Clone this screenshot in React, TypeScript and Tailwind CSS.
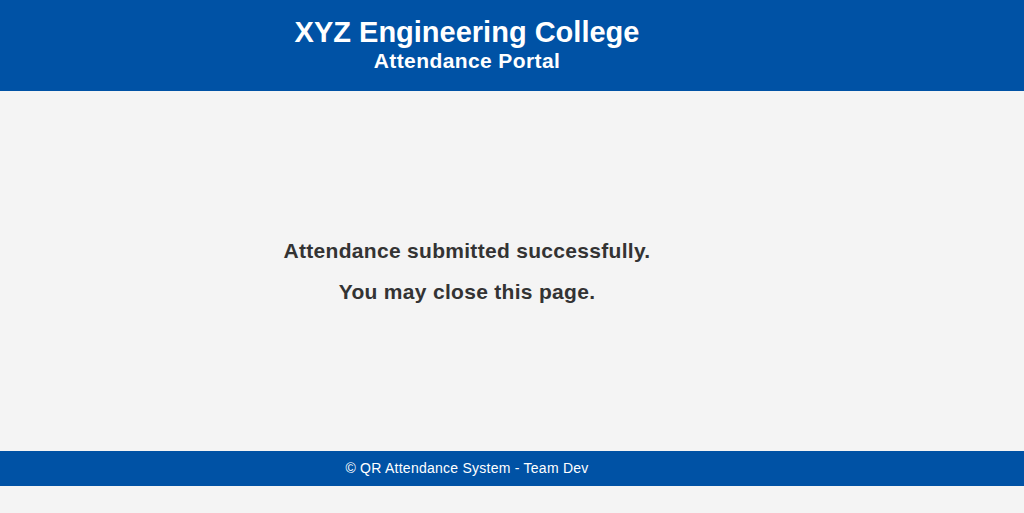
import React from "react";

export default function App() {
  return (
    <div className="min-h-[513px] bg-[#f4f4f4] font-['Liberation_Sans',Arial,sans-serif]">
      <header className="h-[91px] bg-[#0052a5] pt-[15px] pr-[90px] text-center text-white">
        <h1 className="text-[29px] font-bold leading-[34px]">XYZ Engineering College</h1>
        <h2 className="text-[21px] font-bold leading-[24px] tracking-[0.4px]">Attendance Portal</h2>
      </header>

      <main className="flex h-[360px] flex-col items-center justify-center gap-[17px] pr-[90px] text-[#333333]">
        <p className="text-[21px] font-bold leading-[24px] tracking-[0.3px]">Attendance submitted successfully.</p>
        <p className="text-[21px] font-bold leading-[24px] tracking-[0.3px]">You may close this page.</p>
      </main>

      <footer className="flex h-[35px] items-center justify-center bg-[#0052a5] pr-[90px] text-[14px] tracking-[0.25px] text-white">
        © QR Attendance System - Team Dev
      </footer>
    </div>
  );
}
